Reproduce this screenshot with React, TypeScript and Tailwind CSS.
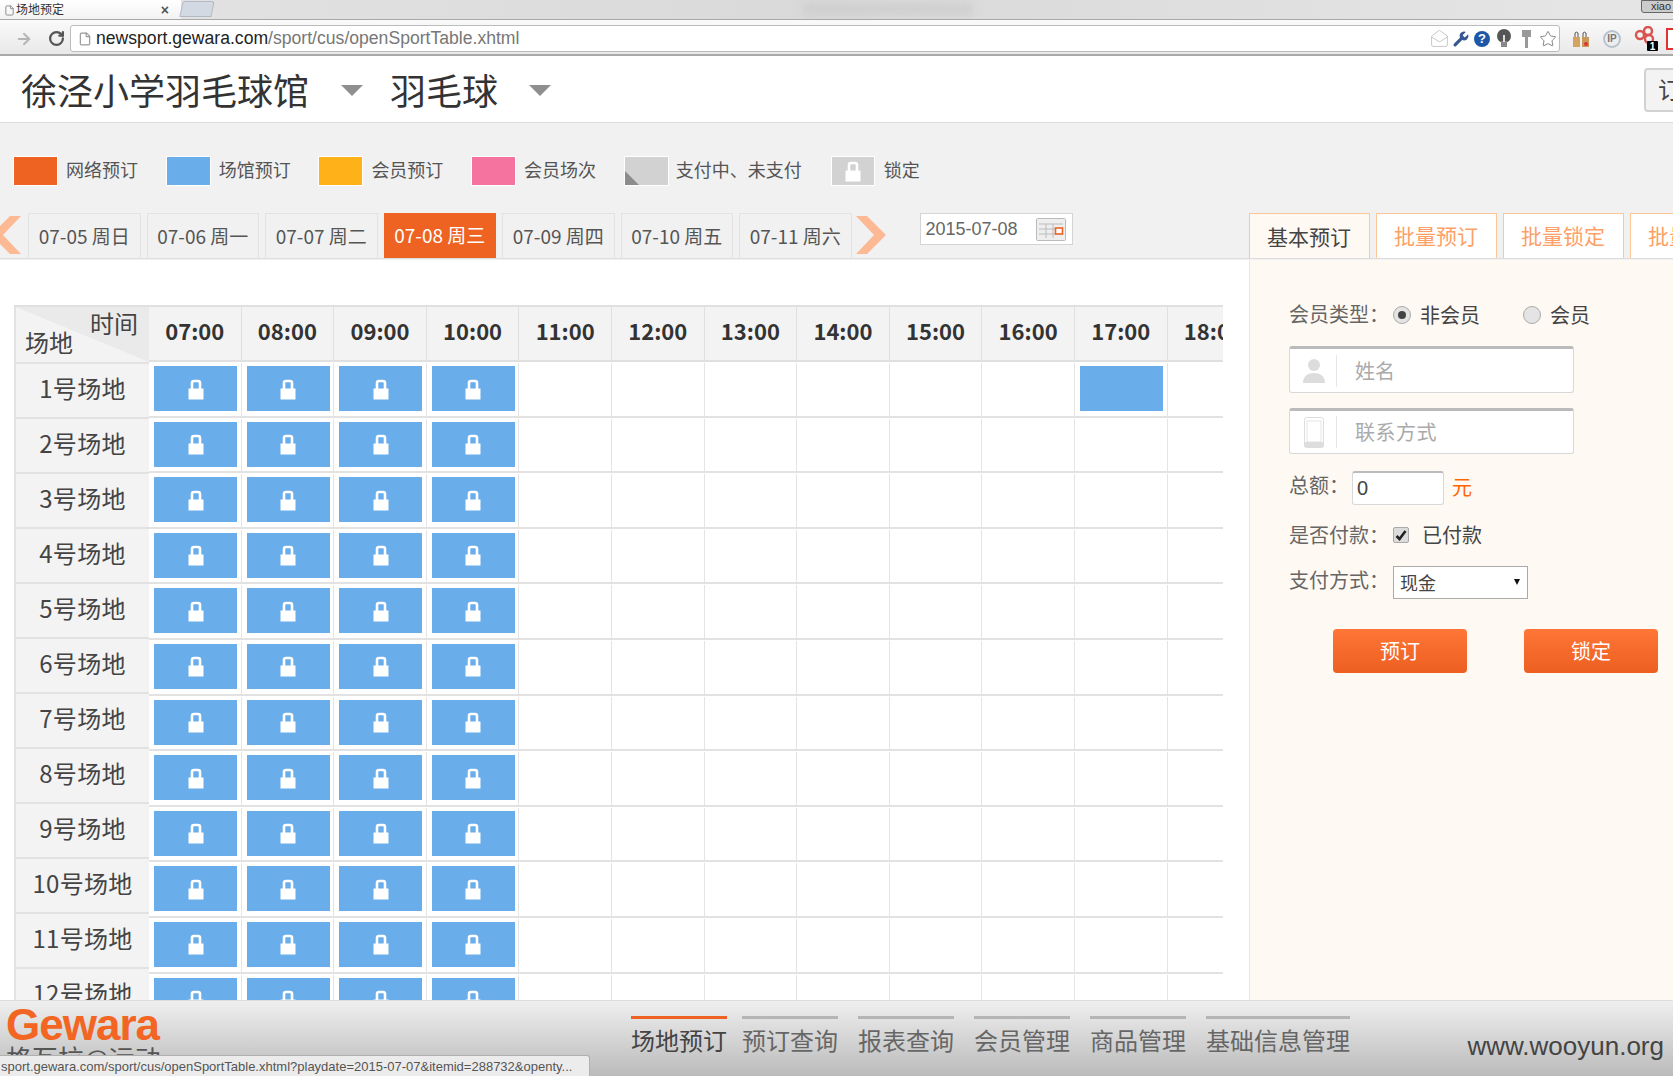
import { ArrowLeft, ArrowRight, File, MailOpen, RotateCw, Star, Wrench } from 'lucide-react';

const LEGEND = [
  { label: '网络预订', cls: 'bg-[#ee6321]' },
  { label: '场馆预订', cls: 'bg-[#69adea]' },
  { label: '会员预订', cls: 'bg-[#ffb119]' },
  { label: '会员场次', cls: 'bg-[#f4739f]' },
];
const DAYS = ['07-05 周日', '07-06 周一', '07-07 周二', '07-08 周三', '07-09 周四', '07-10 周五', '07-11 周六'];
const HOURS = ['07:00', '08:00', '09:00', '10:00', '11:00', '12:00', '13:00', '14:00', '15:00', '16:00', '17:00', '18:00'];
const COURTS = Array.from({ length: 12 }, (_, i) => `${i + 1}号场地`);
const NAV = [
  { label: '场地预订', active: true },
  { label: '预订查询' },
  { label: '报表查询' },
  { label: '会员管理' },
  { label: '商品管理' },
  { label: '基础信息管理' },
];

function Lock({ className = 'fill-white stroke-white' }: { className?: string }) {
  return (
    <svg width="16" height="22" viewBox="0 0 16 22" className={className}>
      <path d="M4 11V5a2 2 0 0 1 2-2h4a2 2 0 0 1 2 2v6" fill="none" strokeWidth="2.6" />
      <rect x="0.5" y="10.5" width="15" height="11" strokeWidth="0" />
    </svg>
  );
}

function Chevron({ dir }: { dir: 'left' | 'right' }) {
  return (
    <svg width="32" height="38" viewBox="0 0 32 38" className="shrink-0">
      <path
        d={dir === 'right' ? 'M1 0h11l19 19-19 19H1l18-19z' : 'M21 0H10L-9 19l19 19h11L3 19z'}
        fill="#fdb994"
      />
    </svg>
  );
}

function BrowserChrome() {
  return (
    <div className="[font-family:'Liberation_Sans','Noto_Sans_CJK_SC',sans-serif]">
      <div className="relative flex h-5 overflow-hidden border-b border-[#a8a8a8] bg-gradient-to-r from-[#e4e4e4] via-[#d9d9d9] to-[#e6e6e6]">
        <div className="flex h-5 w-[181px] items-center bg-gradient-to-b from-white to-[#f2f2f2] pl-1">
          <File size={11} className="text-[#888]" />
          <span className="ml-[1px] text-[12px] leading-none text-[#333]">场地预定</span>
          <span className="ml-auto mr-3 text-[14px] font-bold leading-none text-[#555]">×</span>
        </div>
        <div className="mt-[1px] h-4 w-8 -skew-x-12 rounded-t-[3px] border border-[#b4bac4] bg-[#d3d9e2]" />
        <div className="ml-[590px] mt-[3px] h-3 w-[170px] bg-[#cfcfcf] blur-[4px]" />
        <div className="ml-auto mr-[-8px] h-[13px] w-10 rounded-b-[3px] border border-[#666] bg-[#ccc] text-center text-[11px] leading-[11px] text-[#333]">
          xiao
        </div>
      </div>
      <div className="flex h-9 items-center overflow-hidden border-b-2 border-[#a9a9a9] bg-gradient-to-b from-[#fafafa] to-[#e9e9e9] pt-[3px]">
        <ArrowLeft size={18} strokeWidth={2.6} className="ml-[-16px] shrink-0 text-[#777]" />
        <ArrowRight size={18} strokeWidth={2.6} className="ml-[13px] shrink-0 text-[#b5b5b5]" />
        <RotateCw size={17} strokeWidth={3.2} className="ml-[15px] shrink-0 text-[#555]" />
        <div className="ml-[5px] flex h-[27px] w-[1490px] shrink-0 items-center rounded-[3px] border border-[#bcbcbc] bg-white">
          <File size={14} className="ml-[7px] text-[#999]" />
          <span className="ml-[4px] text-[17.6px] leading-none text-[#222]">
            newsport.gewara.com<span className="text-[#777]">/sport/cus/openSportTable.xhtml</span>
          </span>
          <div className="ml-auto flex items-center">
            <MailOpen size={19} strokeWidth={1} className="text-[#bbb]" />
            <Wrench size={18} strokeWidth={0} className="ml-[3px] fill-[#36578f]" />
            <span className="ml-[4px] flex h-4 w-4 items-center justify-center rounded-full bg-[#1f57a8] text-[13px] font-bold leading-none text-white">
              ?
            </span>
            <svg width="16" height="19" viewBox="0 0 16 19" className="ml-[6px]">
              <circle cx="8" cy="7" r="7" fill="#555" />
              <rect x="5" y="12" width="6" height="6" fill="#888" />
              <rect x="7" y="6" width="2" height="7" fill="#ddd" />
            </svg>
            <svg width="11" height="18" viewBox="0 0 11 18" className="ml-[9px]">
              <path d="M1 0h9v7H7v11H4V7H1z" fill="#999" />
            </svg>
            <Star size={18} strokeWidth={1.2} className="ml-[7px] mr-[2px] text-[#777]" />
          </div>
        </div>
        <div className="ml-[12px] flex shrink-0 items-center">
          <svg width="18" height="18" viewBox="0 0 18 18">
            <path d="M3 7V3a2 2 0 0 1 3 0v4M11 7V3a2 2 0 0 1 3 0v4" fill="none" stroke="#555" />
            <rect x="1" y="7" width="7" height="10" fill="#d5a35e" />
            <rect x="10" y="7" width="7" height="10" fill="#c9995a" />
            <circle cx="14" cy="14" r="2" fill="#d33" />
          </svg>
          <span className="ml-[13px] flex h-[18px] w-[18px] items-center justify-center rounded-full border-2 border-[#b7c2ce] bg-[#eee] text-[10px] font-bold leading-none text-[#777]">
            IP
          </span>
          <svg width="26" height="26" viewBox="0 0 26 26" className="ml-[13px]">
            <circle cx="6" cy="9" r="4" fill="none" stroke="#d9534f" strokeWidth="2.4" />
            <circle cx="14" cy="5" r="4" fill="none" stroke="#d9534f" strokeWidth="2.4" />
            <circle cx="15" cy="13" r="4" fill="none" stroke="#d9534f" strokeWidth="2.4" />
            <rect x="13" y="15" width="11" height="10" rx="1" fill="#000" />
            <text x="18.5" y="24" fontSize="10" fontWeight="bold" fill="#fff" textAnchor="middle">1</text>
          </svg>
          <svg width="14" height="22" viewBox="0 0 14 22" className="ml-[6px]">
            <path d="M1 1h12v20H1z" fill="#fff" stroke="#d33" strokeWidth="2" />
          </svg>
        </div>
      </div>
    </div>
  );
}

function Header() {
  return (
    <div className="flex h-[67px] shrink-0 items-center overflow-hidden whitespace-nowrap border-b border-[#dcdcdc] bg-white pl-[21px] text-[#333]">
      <span className="shrink-0 text-[36px] leading-none">徐泾小学羽毛球馆</span>
      <div className="ml-[32px] mt-[2px] h-0 w-0 shrink-0 border-x-[11px] border-t-[11px] border-x-transparent border-t-[#8f8f8f]" />
      <span className="ml-[27px] shrink-0 text-[36px] leading-none">羽毛球</span>
      <div className="ml-[31px] mt-[2px] h-0 w-0 shrink-0 border-x-[11px] border-t-[11px] border-x-transparent border-t-[#8f8f8f]" />
      <div className="ml-[1093px] mt-[1px] h-11 w-[60px] shrink-0 overflow-hidden rounded-[4px] border-2 border-[#d2d2d2] bg-[#f3f3f3] pl-[12px] text-[24px] leading-[38px] text-[#444]">
        订单
      </div>
    </div>
  );
}

function LegendRow() {
  return (
    <div className="flex h-[30px] items-center pl-[13px] text-[18px] text-[#555]">
      {LEGEND.map((item) => (
        <div key={item.label} className="mr-[25.7px] flex items-center">
          <div className={`h-[30px] w-[45px] border border-white ${item.cls}`} />
          <span className="ml-[8px] w-[74px] pb-[4px] leading-none">{item.label}</span>
        </div>
      ))}
      <div className="mr-[7px] flex h-[30px] w-[45px] items-end overflow-hidden border border-white bg-[#d2d2d2]">
        <div className="h-0 w-0 border-b-[14px] border-r-[14px] border-b-[#8c8c8c] border-r-transparent" />
      </div>
      <span className="mr-[29px] pb-[4px] leading-none">支付中、未支付</span>
      <div className="flex h-[30px] w-[44px] items-center justify-center border border-white bg-[#d2d2d2]">
        <Lock />
      </div>
      <span className="ml-[9px] pb-[4px] leading-none">锁定</span>
    </div>
  );
}

function DateRow() {
  return (
    <div className="mt-[27px] flex h-[46px] items-start overflow-hidden border-b border-[#ddd]">
      <div className="mt-[3px] w-[28px] shrink-0 overflow-hidden">
        <Chevron dir="left" />
      </div>
      <div className="flex shrink-0 gap-[6px]">
        {DAYS.map((day, i) => (
          <div
            key={day}
            className={
              i === 3
                ? 'flex h-[45px] w-[112.5px] items-center justify-center bg-[#ee6321] text-[19px] text-white'
                : 'flex h-[45px] w-[112.5px] items-center justify-center border border-b-0 border-[#e2e2e2] text-[19px] text-[#555]'
            }
          >
            {day}
          </div>
        ))}
      </div>
      <div className="ml-[3px] mt-[3px] shrink-0">
        <Chevron dir="right" />
      </div>
      <div className="ml-[33px] flex h-8 w-[153px] shrink-0 items-center border border-[#d4d4d4] bg-white pl-[5px] text-[18px] text-[#666] [font-family:'Liberation_Sans',sans-serif]">
        2015-07-08
        <svg width="30" height="23" viewBox="0 0 30 23" className="ml-[18px]">
          <rect x="0.5" y="0.5" width="29" height="22" rx="1" fill="#eee" stroke="#bbb" />
          <path d="M3 6h24M3 11h24M3 16h24M10 6v14M17 6v14" stroke="#bbb" />
          <rect x="19.5" y="10" width="7" height="6" fill="#fff" stroke="#ee6321" strokeWidth="1.6" />
        </svg>
      </div>
      <div className="ml-[176px] flex shrink-0 gap-[6px] text-[21px] text-[#fd9f66]">
        <div className="flex h-[46px] w-[121px] items-center justify-center border border-b-0 border-[#fdc795] bg-[#fff9f3] text-[#444]">
          基本预订
        </div>
        {['批量预订', '批量锁定', '批量预订'].map((tab, i) => (
          <div key={i} className="flex h-[46px] w-[121px] items-center justify-center border border-[#fdc795] bg-white">
            {tab}
          </div>
        ))}
      </div>
    </div>
  );
}

function CourtTable() {
  return (
    <div className="ml-[14px] mt-[45px] flex w-[1209px] items-start overflow-hidden border-t-2 border-[#e0e0e0]">
      <div className="w-[135px] shrink-0">
        <div className="relative h-[55px] border-l-2 border-[#e2e2e2] bg-[linear-gradient(to_top_right,#f3f3f3_50%,#eaeaea_50%)] text-[24px] leading-none text-[#444]">
          <span className="absolute right-[11px] top-[4px]">时间</span>
          <span className="absolute left-[9px] top-[23px]">场地</span>
        </div>
        {COURTS.map((court) => (
          <div
            key={court}
            className="flex h-[55px] items-center justify-center border-t-2 border-l-2 border-[#e2e2e2] bg-[#f3f3f3] pb-[6px] text-[24px] leading-none tracking-[0.3px] text-[#444]"
          >
            {court}
          </div>
        ))}
      </div>
      <div className="grid shrink-0 grid-cols-[repeat(12,92.6px)]">
        {HOURS.map((hour) => (
          <div
            key={hour}
            className="flex h-[55px] items-center justify-center border-b-2 border-r border-[#e0e0e0] bg-[#f3f3f3] pb-[6px] text-[22px] font-bold text-[#333]"
          >
            {hour}
          </div>
        ))}
        {COURTS.map((court, row) => (
          <div key={court} className="contents">
            {HOURS.map((hour, col) => (
              <div key={hour} className="h-[55.6px] border-b-2 border-[#e2e2e2] pt-[1px]">
                <div className="h-full border-r border-[#e4e4e4] pl-[5px] pt-[3px]">
                  {(col < 4 || (row === 0 && col === 10)) && (
                    <div className="flex h-[45px] w-[83px] items-center justify-center bg-[#69adea]">
                      {col < 4 && <Lock />}
                    </div>
                  )}
                </div>
              </div>
            ))}
          </div>
        ))}
      </div>
    </div>
  );
}

function BookingForm() {
  return (
    <div className="h-full w-[424px] shrink-0 border-l border-[#f6e3d4] bg-[#fff9f3] pl-[39px] text-[20px] leading-none text-[#666]">
      <div className="mt-[45px] flex h-5 items-center">
        <span className="w-[103px] pb-[2px]">会员类型：</span>
        <div className="ml-[1px] flex h-[18px] w-[18px] items-center justify-center rounded-full border border-[#aaa] bg-[#e4e4e4]">
          <div className="h-2 w-2 rounded-full bg-[#444]" />
        </div>
        <span className="ml-[9px] text-[#444]">非会员</span>
        <div className="ml-[43px] h-[18px] w-[18px] rounded-full border border-[#aaa] bg-[#e4e4e4]" />
        <span className="ml-[9px] text-[#444]">会员</span>
      </div>
      <div className="mt-[21px] flex h-[47px] w-[285px] items-center rounded-[3px] border border-t-[3px] border-[#d8d8d8] border-t-[#bbb] bg-white">
        <svg width="24" height="25" viewBox="0 0 24 25" className="ml-[12px] fill-[#dcdcdc]">
          <circle cx="12" cy="7" r="6" />
          <path d="M1 25c0-7 5-10 11-10s11 3 11 10z" />
        </svg>
        <div className="ml-[10px] h-8 w-px bg-[#e6e6e6]" />
        <span className="ml-[18px] text-[#aaa]">姓名</span>
      </div>
      <div className="mt-[15px] flex h-[46px] w-[285px] items-center rounded-[3px] border border-t-[3px] border-[#d8d8d8] border-t-[#bbb] bg-white">
        <svg width="20" height="31" viewBox="0 0 20 31" className="ml-[14px]">
          <rect x="0.5" y="0.5" width="19" height="30" rx="2" fill="#fff" stroke="#ddd" />
          <rect x="3" y="4" width="14" height="21" fill="#fff" stroke="#e5e5e5" />
          <rect x="0.5" y="25" width="19" height="5" fill="#ddd" />
        </svg>
        <div className="ml-[12px] h-8 w-px bg-[#e6e6e6]" />
        <span className="ml-[18px] tracking-[0.5px] text-[#aaa]">联系方式</span>
      </div>
      <div className="mt-[17px] flex h-[34px] items-center">
        <span className="w-[63px] pb-[6px]">总额：</span>
        <div className="h-[34px] w-[92px] rounded-[3px] border border-t-2 border-[#d8d8d8] border-t-[#bbb] bg-white pl-[4px] text-[20px] leading-[30px] text-[#444] [font-family:'Liberation_Sans',sans-serif]">
          0
        </div>
        <span className="ml-[8px] pb-[3px] text-[#f60]">元</span>
      </div>
      <div className="mt-[20px] flex h-5 items-center">
        <span className="w-[104px]">是否付款：</span>
        <div className="flex h-4 w-4 items-center justify-center rounded-[2px] border border-[#aaa] bg-[#dcdcdc] text-[#333]">
          <svg width="12" height="11" viewBox="0 0 12 11">
            <path d="M1.5 6l3 3 6-8" fill="none" stroke="#222" strokeWidth="2.6" />
          </svg>
        </div>
        <span className="ml-[13px] text-[#444]">已付款</span>
      </div>
      <div className="mt-[21px] flex h-[33px] items-center">
        <span className="w-[104px] pb-[6px]">支付方式：</span>
        <div className="flex h-[33px] w-[135px] items-center border border-[#aaa] bg-white pb-[2px] pl-[6px] text-[18px] text-[#444]">
          现金
          <div className="ml-auto mr-[7px] h-0 w-0 border-x-[3.5px] border-t-[6px] border-x-transparent border-t-[#111]" />
        </div>
      </div>
      <div className="ml-[44px] mt-[30px] flex gap-[57px]">
        {['预订', '锁定'].map((label) => (
          <div
            key={label}
            className="flex h-[44px] w-[134px] items-center justify-center rounded-[4px] bg-gradient-to-b from-[#ff7636] to-[#ec5f20] text-white"
          >
            {label}
          </div>
        ))}
      </div>
    </div>
  );
}

function Footer() {
  return (
    <div className="relative flex h-[76px] shrink-0 overflow-hidden border-t border-[#ddd] bg-gradient-to-b from-[#efefef] to-[#bbbbbb]">
      <div className="w-[631px] shrink-0 pl-[6px] pt-[4px]">
        <div className="text-[44px] font-bold leading-[40px] tracking-[-1px] text-[#f26522] [font-family:'Liberation_Sans',sans-serif]">
          Gewara
        </div>
        <div className="text-[26px] leading-none text-[#555]">格瓦拉@运动</div>
      </div>
      <div className="flex pt-[15px]">
        {NAV.map((item, i) => (
          <div key={item.label} className={i === 0 ? 'mr-[15px]' : 'mr-[20px]'}>
            <div className={item.active ? 'h-[3px] bg-[#ee6321]' : 'h-[3px] bg-[#b5b5b5]'} />
            <div className={item.active ? 'mt-[4px] text-[24px] leading-[34px] text-[#444]' : 'mt-[4px] text-[24px] leading-[34px] text-[#666]'}>
              {item.label}
            </div>
          </div>
        ))}
      </div>
      <div className="ml-auto mr-[9px] pt-[27px] text-[26px] leading-[36px] text-[#444] [font-family:'Liberation_Sans',sans-serif]">
        www.wooyun.org
      </div>
      <div className="absolute bottom-0 left-0 h-[21px] w-[590px] overflow-hidden whitespace-nowrap rounded-tr-[3px] border-r border-t border-[#b0b0b0] bg-[#ececec] pl-[1px] text-[13px] leading-[21px] text-[#555] [font-family:'Liberation_Sans',sans-serif]">
        sport.gewara.com/sport/cus/openSportTable.xhtml?playdate=2015-07-07&amp;itemid=288732&amp;openty...
      </div>
    </div>
  );
}

export default function App() {
  return (
    <div className="flex h-[1076px] w-[1673px] flex-col overflow-hidden bg-white [font-family:'Noto_Sans_CJK_SC','Liberation_Sans',sans-serif]">
      <BrowserChrome />
      <Header />
      <div className="h-[137px] shrink-0 bg-[#f1f1f1] pt-[33px]">
        <LegendRow />
        <DateRow />
      </div>
      <div className="flex min-h-0 flex-1 overflow-hidden">
        <div className="w-[1249px] shrink-0 overflow-hidden">
          <CourtTable />
        </div>
        <BookingForm />
      </div>
      <Footer />
    </div>
  );
}
